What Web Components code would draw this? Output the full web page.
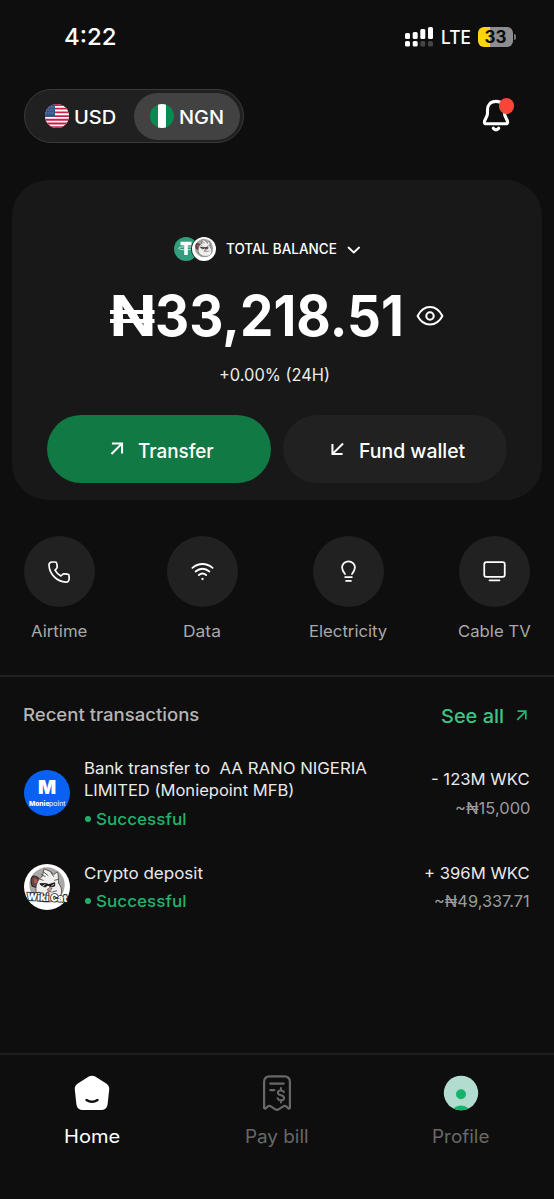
<!DOCTYPE html>
<html lang="en">
<head>
<meta charset="utf-8">
<title>Wallet</title>
<style>
html,body{margin:0;background:#0e0e0e}
body{font-family:Inter,"Liberation Sans",sans-serif;color:#fff;-webkit-font-smoothing:antialiased}
</style>
</head>
<body>
<wallet-app></wallet-app>
<script>
const define=(name,html,setup)=>customElements.define(name,class extends HTMLElement{
  connectedCallback(){
    if(this.shadowRoot)return;
    const t=document.createElement('template');
    t.innerHTML=typeof html==='function'?html(this):html;
    this.attachShadow({mode:'open'}).append(t.content.cloneNode(true));
    if(setup)setup(this);
  }
});

/* One line of text, widened or narrowed to span the width given in "w". */
define('fit-text',e=>`<style>:host{display:block;flex:none;white-space:pre;font-size:${e.getAttribute('s')}px;line-height:24px;height:24px;width:${e.getAttribute('w')}px}span{display:inline-block;transform-origin:0 50%}</style><span></span>`,e=>{
  const s=e.shadowRoot.querySelector('span');
  s.textContent=e.getAttribute('t');
  s.style.transform='scaleX('+(+e.getAttribute('w')/s.offsetWidth)+')';
});

const icons={
  bell:['0 0 30 34','<path d="M15 3.400c-5.400 0-8.500 3.600-8.500 8.400v3.400c0 2-.5 3.200-1.700 5.200-1.800 3-2.100 5.400.5 5.400h19.400c2.600 0 2.300-2.400.5-5.400-1.200-2-1.700-3.200-1.700-5.200v-3.400c0-4.800-3.100-8.400-8.500-8.400Z" stroke-width="3.100"/><path d="M12.300 30.300c1.500 2 3.900 2 5.400 0" stroke-width="3.200"/>'],
  chevron:['0 0 14 8','<path d="m1.500 1.500 5.300 5 5.300-5" stroke-width="1.800"/>'],
  eye:['0 0 28 22','<path d="M1.600 11C7.500-1.100 20.500-1.100 26.400 11 20.500 22.300 7.500 22.300 1.600 11Z" stroke-width="2"/><circle cx="14" cy="11" r="3.700" stroke-width="2.100"/>'],
  up:['0 0 14 14','<path d="M1.500 12.500 12.300 1.700M2 1.500h10.500V12" stroke-width="2.100" stroke-linecap="butt" stroke-linejoin="miter"/>'],
  down:['0 0 14 14','<path d="M12.500 1.500 1.700 12.300M1.500 2v10.500H12" stroke-width="2.100" stroke-linecap="butt" stroke-linejoin="miter"/>'],
  phone:['0 0 24 24','<path d="M5.100 2h2.800C9 2 9.700 2.700 9.800 3.700l.4 3.100c.1.700-.1 1.200-.600 1.700L8 10.200c1.300 2.500 3.300 4.500 5.900 5.800l1.700-1.600c.5-.5 1-.7 1.700-.6l3.100.4c1 .1 1.700.900 1.700 1.900v2.900c0 1.900-1.400 3.200-3.200 3.100C9.900 21.600 2.500 14.100 2 5.200 1.900 3.400 3.300 2 5.100 2Z" stroke-width="1.700"/>'],
  wifi:['0 0 24 24','<path d="M1.500 8.200C7.800 2.800 16.200 2.800 22.500 8.200M4.800 12c4.300-3.800 10.100-3.800 14.400 0M8.200 15.700c2.300-2 5.300-2 7.600 0" stroke-width="1.900"/><circle cx="12" cy="19.800" r="1.200" fill="currentColor" stroke="none"/>'],
  bulb:['0 0 24 24','<path d="M8.300 14.700C6.500 12.300 5.300 10.300 5.300 7.900 5.300 4.200 8.300 1.400 12 1.400s6.700 2.800 6.700 6.500c0 2.400-1.200 4.400-3 6.800M8.500 17.800h7M9.500 21.900h5" stroke-width="1.850"/>'],
  tv:['0 0 24 24','<rect x="1.300" y="2.300" width="21.400" height="15.400" rx="2.200" stroke-width="1.850"/><path d="M6.800 21.200h10.400" stroke-width="1.850"/>'],
  home:['0 0 36 36','<path fill="#fff" stroke="none" d="M14.800 1.600c2-1.300 4.400-1.300 6.400 0l11 6.900c2.300 1.500 3.300 3.500 3 6.100l-1.500 13.800c-.6 4.800-2.700 6.600-7.400 6.600H9.700c-4.700 0-6.800-1.800-7.400-6.600L.8 14.600c-.3-2.600.7-4.600 3-6.100Z"/><path d="M12.500 24.900c3.300 2.300 7.700 2.300 11 0" stroke="#0e0e0e" stroke-width="2.400"/>'],
  bill:['0 0 30 36','<path d="M2.100 32.600V7c0-4 1.700-5.700 5.600-5.700h14.600c3.900 0 5.600 1.700 5.600 5.700v25.600c0 1-.8 1.300-1.600.7l-2.500-2.100c-.8-.6-1.500-.600-2.200 0L17 34.200c-1.500 1-2.500 1-4 0l-4.600-3c-.7-.6-1.400-.6-2.200 0l-2.500 2.100c-.8.6-1.600.3-1.600-.7ZM8.300 8.600h13.400M8.300 15.100h4" stroke-width="2.200"/><path d="M22 17.200c-.6-1.300-1.700-1.800-3.200-1.800-1.800 0-2.900 1-2.900 2.300 0 3.600 6.200 1.500 6.200 5.200 0 1.500-1.300 2.400-3.200 2.400-1.700 0-2.800-.7-3.300-2M18.900 13.100v2M18.900 25.600v1.900" stroke-width="2"/>'],
  user:['0 0 36 36','<defs><clipPath id="c"><circle cx="18" cy="18" r="17.200"/></clipPath></defs><g stroke="none"><circle cx="18" cy="18" r="17.200" fill="#b2dcd0"/><circle cx="18" cy="19.200" r="5" fill="#18b26b"/><ellipse cx="18" cy="36" rx="8" ry="5.500" fill="#18b26b" clip-path="url(#c)"/></g>'],
  us:['0 0 24 24','<defs><clipPath id="c"><circle cx="12" cy="12" r="12"/></clipPath></defs><g clip-path="url(#c)" stroke="none"><path fill="#fff" d="M0 0h24v24H0z"/><path d="M0 1h24M0 4.690h24M0 8.380h24M0 12.070h24M0 15.760h24M0 19.450h24M0 23.140h24" stroke="#c5214b" stroke-width="1.850"/><path fill="#345487" d="M0 0h10v12.900H0z"/><path d="M2 3h7M1 6h8M1 9h8" stroke="#8195b8" stroke-width=".7" stroke-dasharray=".7 1.500"/></g>'],
  ng:['0 0 24 24','<defs><clipPath id="c"><circle cx="12" cy="12" r="12"/></clipPath></defs><g clip-path="url(#c)" stroke="none"><path fill="#078b51" d="M0 0h24v24H0z"/><path fill="#fff" d="M8 0h8v24H8z"/></g>'],
  tether:['0 0 24 24','<g stroke="none"><circle cx="12" cy="12" r="12" fill="#329d7c"/><path d="M6.500 4.800h11v3.500h-3.700V18h-3.600V8.300H6.500Z" fill="#fff"/></g><ellipse cx="12" cy="11.300" rx="7.500" ry="1.600" stroke="#d9f1e9" stroke-width=".8"/>'],
  cat:['0 0 48 48','<g stroke-linejoin="round"><circle cx="24" cy="24" r="24" fill="#fff" stroke="none"/><circle cx="24" cy="22" r="18.500" fill="#aaa8a7" stroke="none"/><path d="M8.500 23c-2-5-1-10 1.500-10.500 4 0 6 3 8 5l-3 8Z" fill="#6b4745" stroke="#292525" stroke-width="1.200"/><path d="M11 20c-1-3 0-5 .5-5 1.500 1 3 2.500 3 4Z" fill="#b65957" stroke="none"/><path d="M13 31c-2-7 1-15 6-18l2-8 7 3 3 3 4-3c1 4 1 8 1 12 5 6 4 13-1 17-6 3-17 3-22-6Z" fill="#f0efed" stroke="#514e4d" stroke-width="1"/><path d="m18 11 4 2m-2-5 5 4m3-3 3 4m1 4 4-1M17 16l3 1m10 12 4-1" stroke="#555" stroke-width="1"/><path d="M17 20.500h6l3 1 6-2v3.500l-4 1-3-2-3 2-4-2Z" fill="#171717" stroke="#171717" stroke-width="1"/><path d="m20 22.500 2-1m7 1 2-1" stroke="#dcdcdc" stroke-width="1"/><path d="m26 25-2 2 3 1 2-2ZM24 29.500l3-1 2 1" stroke="#5c5352" fill="#da9c98" stroke-width=".8"/></g>']
};
define('ui-icon',e=>{const [v,p]=icons[e.getAttribute('name')];
  return `<style>:host{display:block;flex:none;width:${e.getAttribute('w')}px;height:${e.getAttribute('h')||e.getAttribute('w')}px}svg{display:block;width:100%;height:100%}</style><svg viewBox="${v}" fill="none" stroke="currentColor" stroke-linecap="round" stroke-linejoin="round">${p}</svg>`;});

define('status-bar',`<style>
:host{display:flex;box-sizing:border-box;height:89px;padding:25px 38px 0 64px;justify-content:space-between;align-items:flex-start}
.r{display:flex;align-items:center;height:24px}
svg{display:block;margin-right:7px}
.b{width:35px;height:20px;border-radius:6px;background:linear-gradient(90deg,#ffd60a 12px,#8d8d8f 12px);color:#0b0b0b;display:flex;align-items:center;justify-content:center;font-weight:700;margin-left:7px}
.n{width:2px;height:6px;border-radius:0 2px 2px 0;background:#747476;margin-left:1px}
</style><fit-text t="4:22" s="23.500" w="53" style="font-weight:550"></fit-text>
<div class="r"><svg width="29" height="20" fill="#fff"><rect x="0" y="6" width="5" height="6" rx="1.500"/><rect x="7.700" y="5" width="5" height="7" rx="1.500"/><rect x="15.300" y="2" width="5" height="10" rx="1.500"/><rect x="23" y="0" width="5" height="12" rx="1.500"/><rect x="0" y="14" width="5" height="5.500" rx="1.500"/><rect x="7.700" y="14" width="5" height="5.500" rx="1.500"/><g fill="#444"><rect x="15.300" y="14" width="5" height="5.500" rx="1.500"/><rect x="23" y="14" width="5" height="5.500" rx="1.500"/></g></svg>
<fit-text t="LTE" s="19" w="30" style="font-weight:500;margin-top:1px"></fit-text><div class="b"><fit-text t="33" s="17" w="22"></fit-text></div><div class="n"></div></div>`);

define('top-bar',`<style>
:host{display:flex;box-sizing:border-box;height:91px;padding:0 43px 0 24px;justify-content:space-between;align-items:flex-start;font-weight:500}
.p{box-sizing:border-box;width:220px;height:54px;border:1px solid #393939;border-radius:27px;background:#202020;display:flex;align-items:center;justify-content:space-between;padding:0 3px 0 20px}
.o{display:flex;align-items:center;gap:5px;height:24px}
.a{box-sizing:border-box;width:106px;height:47px;border-radius:24px;background:#424242;padding-left:16px;display:flex;align-items:center;gap:5px}
fit-text{margin-top:2px}
.bell{position:relative;margin-top:9px}
.dot{position:absolute;left:17.500px;top:0;width:15.500px;height:15.500px;border-radius:50%;background:#fb4538}
</style><div class="p"><div class="o"><ui-icon name="us" w="24"></ui-icon><fit-text t="USD" s="18.600" w="42"></fit-text></div><div class="a"><ui-icon name="ng" w="24"></ui-icon><fit-text t="NGN" s="18.600" w="45"></fit-text></div></div>
<div class="bell"><ui-icon name="bell" w="30" h="34"></ui-icon><div class="dot"></div></div>`);

define('pill-button',e=>`<style>:host{box-sizing:border-box;display:flex;width:224px;height:68px;border-radius:34px;align-items:center;padding-top:3px;padding-left:${e.getAttribute('pad')}px;gap:14px;background:${e.getAttribute('bg')};font-weight:450}ui-icon{margin-bottom:4px}</style><slot></slot>`);

define('balance-card',`<style>
:host{box-sizing:border-box;display:flex;flex-direction:column;margin:0 12px;height:320px;border-radius:36px;background:#181818}
.t{display:flex;align-items:center;height:26px;margin:56px 0 0 162px;font-weight:500}
.c{display:flex;margin-right:9px}
.cat{border:1.500px solid #181818;border-radius:50%;margin:-1.500px 0 -1.500px -7.500px}
.v{display:flex;align-items:center;height:56px;margin:25px 0 0 97px;font-weight:700}
.v fit-text{line-height:56px;height:56px;margin-top:1px}
.d{margin:20px 0 0 207px;color:#ececec}
.b{display:flex;gap:12px;margin:28px 0 0 35px}
.b ui-icon{margin-bottom:3px}
</style>
<div class="t"><div class="c"><ui-icon name="tether" w="24"></ui-icon><ui-icon class="cat" name="cat" w="24"></ui-icon></div><fit-text t="TOTAL BALANCE" s="14.200" w="110.500"></fit-text><ui-icon name="chevron" w="14" h="8" style="margin-left:11px;margin-top:1px"></ui-icon></div>
<div class="v"><fit-text t="₦" s="56" w="46"></fit-text><fit-text t="33,218.51" s="56" w="249"></fit-text><ui-icon name="eye" w="28" h="22" style="margin-left:12px;margin-top:1px"></ui-icon></div>
<fit-text class="d" t="+0.00% (24H)" s="16.700" w="111"></fit-text>
<div class="b"><pill-button pad="63" bg="#107944"><ui-icon name="up" w="13.500"></ui-icon><fit-text t="Transfer" s="19.600" w="76"></fit-text></pill-button>
<pill-button pad="48" bg="#212121"><ui-icon name="down" w="13.500"></ui-icon><fit-text t="Fund wallet" s="19.600" w="106"></fit-text></pill-button></div>`);

define('service-item',e=>`<style>:host{display:flex;flex-direction:column;align-items:center;width:74px;color:#a9a9a9}
.c{width:71px;height:71px;border-radius:50%;background:#212121;color:#fff;display:flex;align-items:center;justify-content:center;margin-bottom:12px}</style>
<div class="c"><ui-icon name="${e.getAttribute('icon')}" w="${e.getAttribute('iw')||23}"></ui-icon></div><fit-text t="${e.getAttribute('label')}" s="16.500" w="${e.getAttribute('w')}"></fit-text>`);
define('service-row',`<style>:host{box-sizing:border-box;display:grid;grid-template-columns:143px 146px 146px 74px;height:177px;padding:36px 0 0 22px;border-bottom:2px solid #212121}</style><slot></slot>`);

define('section-head',`<style>:host{display:flex;height:76px;padding:26px 27px 0 23px;box-sizing:border-box;justify-content:space-between;font-weight:500;color:#b5b5b5}.m{display:flex;color:#3bc485;margin-top:1px}.m fit-text{margin-top:1px}ui-icon{margin:6px 0 0 12px;color:#20b875}</style>
<fit-text t="Recent transactions" s="17.400" w="176"></fit-text><div class="m"><fit-text t="See all" s="18.700" w="63"></fit-text><ui-icon name="up" w="11"></ui-icon></div>`);

define('tx-item',`<style>
:host{display:flex;align-items:center;padding:0 24px 0 24px;color:#e9e9e9}
.m{flex:1;margin-left:14px}
.s{display:flex;align-items:center;color:#20b26b;font-weight:500;gap:5px;margin-left:1px}
.s i{width:6px;height:6px;border-radius:50%;background:currentColor}
.a{display:flex;flex-direction:column;align-items:flex-end;gap:4.500px}
</style><slot name="avatar"></slot><div class="m"><slot></slot><div class="s"><i></i><fit-text t="Successful" s="16.500" w="90"></fit-text></div></div><div class="a"><slot name="amount"></slot></div>`);

define('bank-logo',`<style>:host{display:flex;flex-direction:column;align-items:center;width:46px;height:46px;border-radius:50%;background:#0961f4;color:#fff}
.m{font:900 19px/18px Inter,sans-serif;margin-top:9px}
.n{display:flex;margin-top:2px}fit-text{line-height:10px;height:10px}</style><div class="m">M</div><div class="n"><fit-text t="Monie" s="6.800" w="20.500" style="font-weight:800"></fit-text><fit-text t="point" s="6.800" w="16.500"></fit-text></div>`);
define('cat-logo',`<style>:host{display:block;position:relative;width:46px;height:46px}
.w{position:absolute;left:3px;top:27px;transform:rotate(3deg);font-weight:900;color:#fff;-webkit-text-stroke:1.800px #242424;paint-order:stroke fill}
.w fit-text{line-height:12px;height:12px}</style><ui-icon name="cat" w="46"></ui-icon><div class="w"><fit-text t="Wiki Cat" s="10" w="40"></fit-text></div>`);

define('tab-item',e=>`<style>:host{display:flex;flex-direction:column;align-items:center;gap:13px}</style><ui-icon name="${e.getAttribute('icon')}" w="${e.getAttribute('iw')}" h="36"></ui-icon><fit-text t="${e.getAttribute('label')}" s="18.300" w="${e.getAttribute('w')}"></fit-text>`);
define('tab-bar',`<style>:host{box-sizing:border-box;display:grid;grid-template-columns:repeat(3,184.600px);height:146px;padding-top:20px;border-top:2px solid #1d1d1d;color:#686868}</style><slot></slot>`);

define('wallet-app',`<style>
:host{display:flex;flex-direction:column;width:554px;height:1199px;overflow:hidden;background:#0e0e0e}
.list{flex:1;padding-top:3px}
.one{height:75px}.two{height:52px;margin-top:30px}
.one bank-logo{margin-bottom:2px}
.two cat-logo{margin-bottom:1px}
.g{color:#9c9c9c}
</style>
<status-bar></status-bar><top-bar></top-bar><balance-card></balance-card>
<service-row><service-item icon="phone" iw="24" label="Airtime" w="56"></service-item><service-item icon="wifi" label="Data" w="38"></service-item><service-item icon="bulb" label="Electricity" w="78"></service-item><service-item icon="tv" label="Cable TV" w="73"></service-item></service-row>
<section-head></section-head>
<div class="list">
<tx-item class="one"><bank-logo slot="avatar"></bank-logo><fit-text t="Bank transfer to  AA RANO NIGERIA" s="16" w="283" style="height:22.500px"></fit-text><fit-text t="LIMITED (Moniepoint MFB)" s="16" w="210" style="margin-bottom:5px"></fit-text><fit-text slot="amount" t="- 123M WKC" s="16.500" w="99"></fit-text><fit-text slot="amount" class="g" t="~₦15,000" s="16.500" w="75"></fit-text></tx-item>
<tx-item class="two"><cat-logo slot="avatar"></cat-logo><fit-text t="Crypto deposit" s="16" w="119" style="margin-bottom:4.500px"></fit-text><fit-text slot="amount" t="+ 396M WKC" s="16.500" w="106"></fit-text><fit-text slot="amount" class="g" t="~₦49,337.71" s="16.500" w="96"></fit-text></tx-item>
</div>
<tab-bar><tab-item icon="home" iw="36" label="Home" w="56" style="color:#fff"></tab-item><tab-item icon="bill" iw="30" label="Pay bill" w="64"></tab-item><tab-item icon="user" iw="36" label="Profile" w="58"></tab-item></tab-bar>`);
</script>
</body>
</html>
